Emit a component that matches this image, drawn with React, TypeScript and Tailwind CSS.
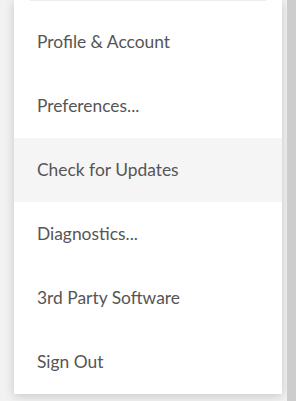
const items = [
  "Profile & Account",
  "Preferences...",
  "Check for Updates",
  "Diagnostics...",
  "3rd Party Software",
  "Sign Out",
];

export default function App() {
  return (
    <div className="flex h-[401px] w-[296px] overflow-hidden bg-[#f2f2f2] font-['Lato',sans-serif]">
      <div className="flex-1 pl-[14px] pr-[5px]">
        <div className="w-[268px] bg-white shadow-[0_2px_10px_rgba(0,0,0,0.18)]">
          <div className="mx-[16px] h-px bg-[#ececec]" />
          <ul className="pt-[9px]">
            {items.map((label) => (
              <li
                key={label}
                className={
                  "flex h-16 items-center px-[23px] text-[17.4px] text-[#555] " +
                  (label === "Check for Updates" ? "bg-[#f5f5f5]" : "")
                }
              >
                {label}
              </li>
            ))}
          </ul>
        </div>
      </div>
      <div className="w-[9px] bg-[#cdcdcd]" />
    </div>
  );
}
